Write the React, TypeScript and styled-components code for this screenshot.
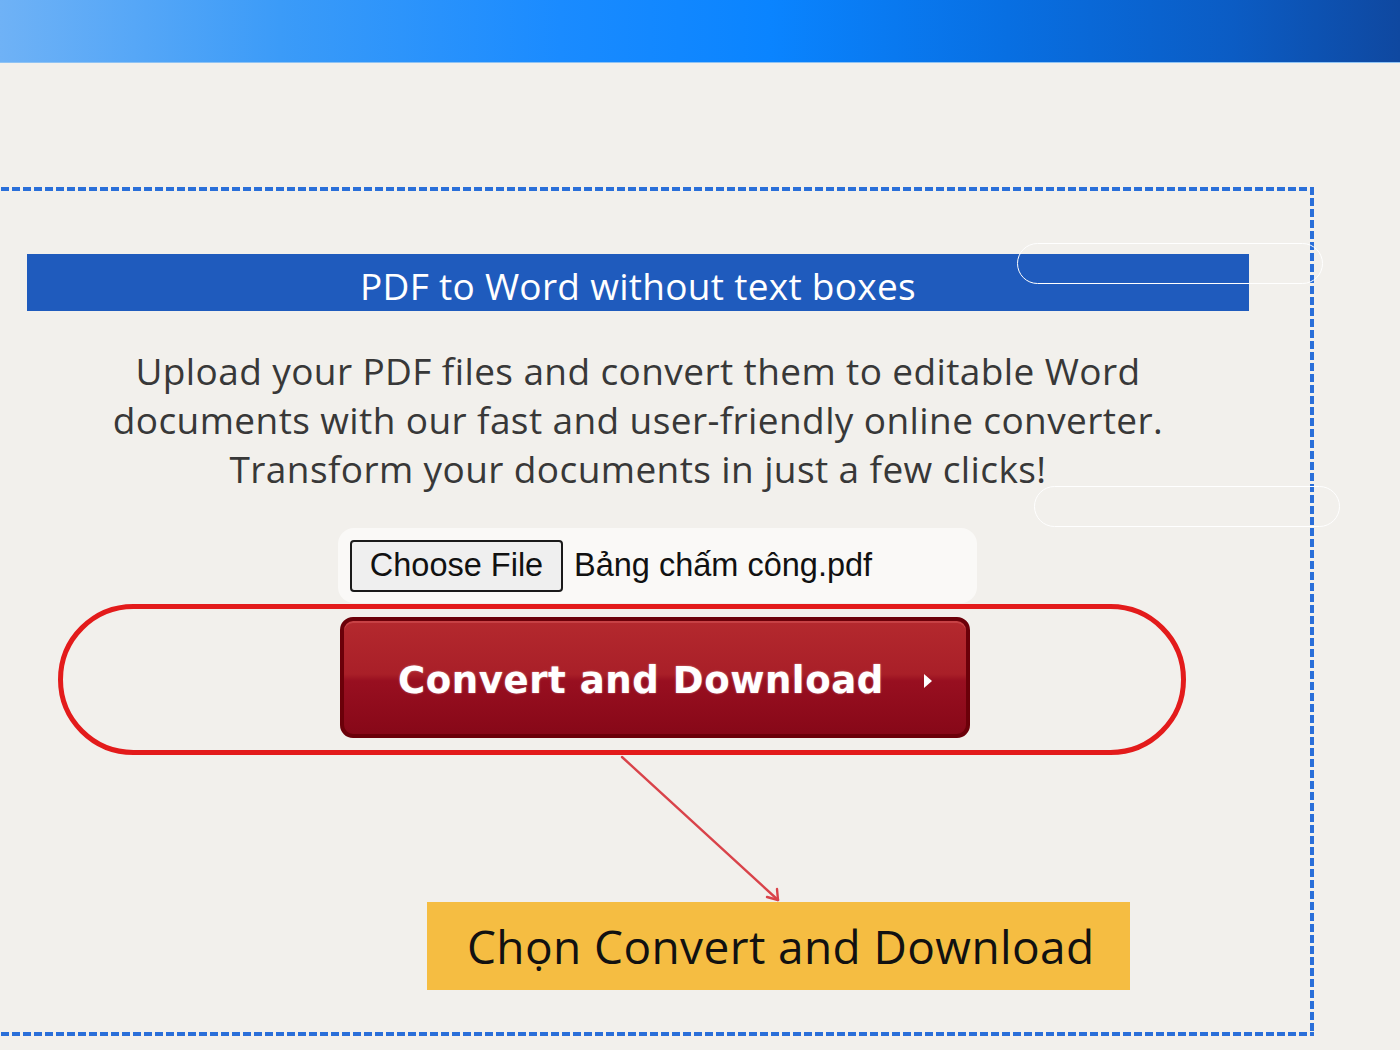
import styled, { createGlobalStyle } from "styled-components";

const GlobalStyle = createGlobalStyle`
	html, body {
		margin: 0;
		padding: 0;
		background: #f2f0ec;
		overflow: hidden;
	}
	* { box-sizing: border-box; }
`;

const Page = styled.div`
	width: 1400px;
	height: 1050px;
	background: #f2f0ec;
	font-family: "Open Sans", Lato, sans-serif;
	overflow: hidden;
`;

const TopBar = styled.div`
	height: 63px;
	background: linear-gradient(90deg, #6fb2f6 0%, #3b9bf8 20%, #1a8bff 40%, #0a84ff 55%, #086fe2 72%, #0b5cc4 88%, #0f48a0 100%);
	border-bottom: 1px solid #8fc3f4;
`;

const Stage = styled.div`
	padding-top: 124px;
`;

const dash = "#2a6fd9";

const DashedBox = styled.div`
	position: relative;
	margin-left: -10px;
	width: 1324px;
	height: 849px;
	padding: 67px 0 0 37px;
	background:
		repeating-linear-gradient(90deg, ${dash} 0 8px, transparent 8px 11px) top left / 100% 4px no-repeat,
		repeating-linear-gradient(90deg, ${dash} 0 8px, transparent 8px 11px) bottom left / 100% 4px no-repeat,
		repeating-linear-gradient(180deg, ${dash} 0 8px, transparent 8px 11px) top right / 4px 100% no-repeat;
`;

const Column = styled.div`
	width: 1222px;
	display: flex;
	flex-direction: column;
	align-items: flex-start;
`;

const TitleBar = styled.div`
	width: 100%;
	height: 57px;
	background: #1f5bbd;
	color: #ffffff;
	font-size: 37px;
	line-height: 64px;
	text-align: center;
	letter-spacing: 0.3px;
`;

const Intro = styled.p`
	width: 100%;
	margin: 35px 0 0;
	font-size: 37px;
	line-height: 49px;
	letter-spacing: 0.4px;
	color: #383838;
	text-align: center;
`;

const FileRow = styled.div<{ $offset: number }>`
	margin: 35px 0 0 ${(p) => p.$offset}px;
	width: 639px;
	height: 75px;
	background: #faf9f7;
	border-radius: 16px;
	display: flex;
	align-items: center;
	gap: 11px;
	padding-left: 12px;
	font-family: "Liberation Sans", Arial, sans-serif;
	font-size: 32.5px;
	color: #111111;
`;

const ChooseButton = styled.div`
	width: 213px;
	height: 52px;
	border: 2px solid #1a1a1a;
	border-radius: 4px;
	background: #efefef;
	display: flex;
	align-items: center;
	justify-content: center;
`;

const ConvertButton = styled.div<{ $offset: number }>`
	margin: 14px 0 0 ${(p) => p.$offset}px;
	width: 630px;
	height: 121px;
	border: 4px solid #6b0009;
	border-radius: 13px;
	background: linear-gradient(180deg, #b4292e 0%, #a91f28 47%, #980f20 53%, #870818 100%);
	box-shadow: inset 0 2px 0 rgba(255, 140, 140, 0.25);
	display: flex;
	align-items: center;
	padding: 6px 0 0 54px;
	gap: 40px;
	color: #ffffff;
	font-family: "DejaVu Sans", Verdana, sans-serif;
	font-weight: bold;
	font-size: 37px;
	letter-spacing: 0.6px;
	text-shadow: 0 0 2px rgba(255, 255, 255, 0.5);
`;

const Caret = styled.span`
	width: 0;
	height: 0;
	border-top: 7px solid transparent;
	border-bottom: 7px solid transparent;
	border-left: 8px solid #ffffff;
`;

const Callout = styled.div<{ $offset: number }>`
	margin: 164px 0 0 ${(p) => p.$offset}px;
	width: 703px;
	height: 88px;
	background: #f5bd42;
	display: flex;
	align-items: center;
	padding-left: 40px;
	font-family: "Open Sans", sans-serif;
	font-size: 46px;
	letter-spacing: 0.4px;
	color: #111111;
`;

const Highlight = styled.div`
	position: absolute;
	left: 68px;
	top: 417px;
	width: 1128px;
	height: 151px;
	border: 5px solid #e31b1b;
	border-radius: 76px;
	pointer-events: none;
`;

const Pill = styled.div<{ $x: number; $y: number }>`
	position: absolute;
	left: ${(p) => p.$x}px;
	top: ${(p) => p.$y}px;
	width: 306px;
	height: 41px;
	border: 1.5px solid #ffffff;
	border-radius: 21px;
	pointer-events: none;
`;

const Pointer = styled.svg`
	position: absolute;
	left: 630px;
	top: 568px;
`;

export default function App(): JSX.Element {
	return (
		<Page>
			<GlobalStyle />
			<TopBar />
			<Stage>
				<DashedBox>
					<Column>
						<TitleBar>PDF to Word without text boxes</TitleBar>
						<Intro>
							Upload your PDF files and convert them to editable Word<br />
							documents with our fast and user-friendly online converter.<br />
							Transform your documents in just a few clicks!
						</Intro>
						<FileRow $offset={311}>
							<ChooseButton>Choose File</ChooseButton>
							<span>Bảng chấm công.pdf</span>
						</FileRow>
						<ConvertButton $offset={313}>
							<span>Convert and Download</span>
							<Caret />
						</ConvertButton>
						<Callout $offset={400}>Chọn Convert and Download</Callout>
					</Column>

					<Highlight />
					<Pill $x={1027} $y={56} />
					<Pill $x={1044} $y={299} />
					<Pointer width="164" height="152" viewBox="0 0 164 152">
						<path d="M2 2 L158 145" stroke="#d9434a" strokeWidth="2.4" fill="none" strokeLinecap="round" />
						<path d="M147 142 L158 145 L157 134" stroke="#d9434a" strokeWidth="2.4" fill="none" strokeLinecap="round" strokeLinejoin="round" />
					</Pointer>
				</DashedBox>
			</Stage>
		</Page>
	);
}
